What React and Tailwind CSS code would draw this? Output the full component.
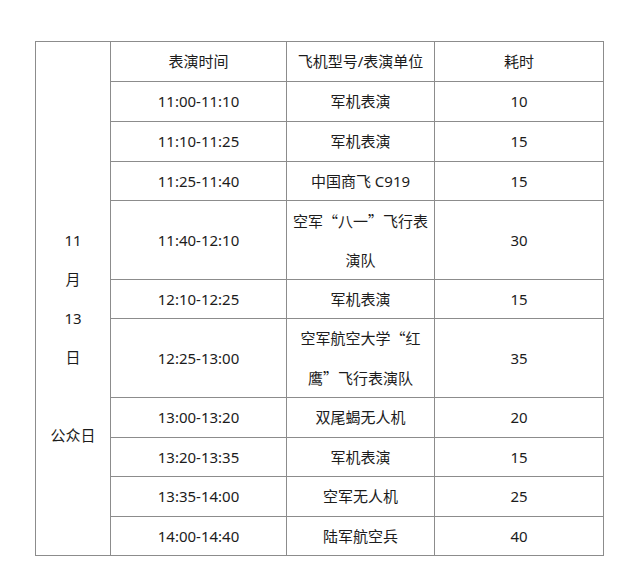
import React from "react";

const Q = ({ c }) => (
  <span style={{ fontFamily: '"Noto Sans CJK SC", sans-serif' }}>{c}</span>
);

const rows = [
  { t: "11:00-11:10", u: ["军机表演"], d: "10", h: "40px" },
  { t: "11:10-11:25", u: ["军机表演"], d: "15", h: "40px" },
  { t: "11:25-11:40", u: ["中国商飞 C919"], d: "15", h: "39px" },
  {
    t: "11:40-12:10",
    u: [
      <>空军<Q c="“" />八一<Q c="”" />飞行表</>,
      "演队",
    ],
    d: "30",
    h: "79px",
  },
  { t: "12:10-12:25", u: ["军机表演"], d: "15", h: "39px" },
  {
    t: "12:25-13:00",
    u: [
      <>空军航空大学<Q c="“" />红</>,
      <>鹰<Q c="”" />飞行表演队</>,
    ],
    d: "35",
    h: "79px",
  },
  { t: "13:00-13:20", u: ["双尾蝎无人机"], d: "20", h: "40px" },
  { t: "13:20-13:35", u: ["军机表演"], d: "15", h: "39px" },
  { t: "13:35-14:00", u: ["空军无人机"], d: "25", h: "40px" },
  { t: "14:00-14:40", u: ["陆军航空兵"], d: "40", h: "39px" },
];

const cell =
  "border-r border-b border-[#8c8c8c] flex flex-col items-center justify-center text-center";

export default function App() {
  return (
    <div
      className="w-[640px] h-[578px] bg-white text-[#1c1c1c] text-[15px]"
      style={{ fontFamily: '"Noto Sans", "Noto Sans CJK SC", sans-serif' }}
    >
      <div className="pt-[41px] pl-[35px]">
        <div
          className="grid grid-cols-[75px_176px_148px_169px] border-t border-l border-[#8c8c8c] w-fit"
          style={{ gridTemplateRows: ["40px", ...rows.map((r) => r.h)].join(" ") }}
        >
          <div className="row-span-11 border-r border-b border-[#8c8c8c] flex flex-col items-center pt-[179px] leading-[39px]">
            <span>11</span>
            <span>月</span>
            <span>13</span>
            <span>日</span>
            <span>&nbsp;</span>
            <span>公众日</span>
          </div>
          <div className={cell}>表演时间</div>
          <div className={cell}>飞机型号/表演单位</div>
          <div className={cell}>耗时</div>
          {rows.map((r, i) => (
            <React.Fragment key={i}>
              <div className={cell}>{r.t}</div>
              <div className={cell + " leading-[39px]"}>
                {r.u.map((l, j) => (
                  <span key={j} className="whitespace-nowrap">{l}</span>
                ))}
              </div>
              <div className={cell}>{r.d}</div>
            </React.Fragment>
          ))}
        </div>
      </div>
    </div>
  );
}
